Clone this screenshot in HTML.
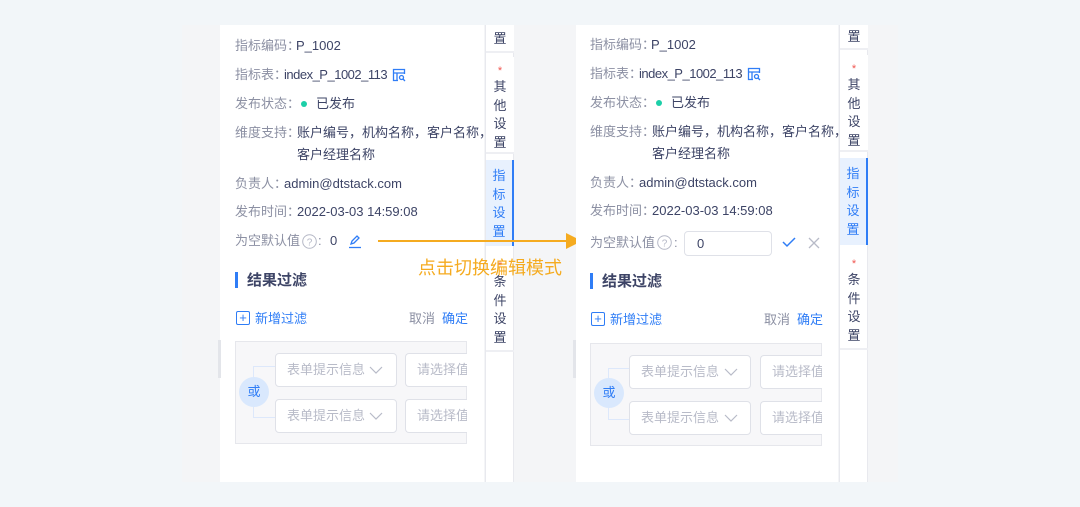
<!DOCTYPE html>
<html><head><meta charset="utf-8"><style>
*{margin:0;padding:0;box-sizing:border-box}
body{width:1080px;height:507px;background:#f2f6f9;position:relative;overflow:hidden;font-family:"Liberation Sans","Noto Sans CJK SC",sans-serif;font-size:13px;line-height:20px;color:#3d4466}
.a{position:absolute;white-space:nowrap}
.lb{color:#8c90a3}
.grey{position:absolute;left:182px;top:25px;width:716px;height:457px;background:#f4f5f7}
.panel{position:absolute;top:25px;height:457px;background:#fff}
.tabs{position:absolute;top:25px;width:29px;height:457px;background:#fff;border-left:1px solid #e8e9ee;border-right:1px solid #e8e9ee}
.tab{position:absolute;left:0;width:28px;font-size:13px;line-height:18.5px;text-align:center;color:#3d4466;border-bottom:2px solid #eeeff3;background:#fff}
.tab.on{background:#e8f1fe;color:#2f7df6;border-right:2px solid #2f7df6;border-bottom:none}
.star{color:#f0554f;font-size:11px;line-height:14px}
.box{position:absolute;background:#f7f7f9;border:1px solid #e6e7ec}
.sel{position:absolute;height:34px;background:#fff;border:1px solid #dfe1e8;border-radius:4px;color:#b8bbc8;font-size:13px;line-height:32px;padding-left:11px;overflow:hidden;white-space:nowrap}
.or{position:absolute;width:30px;height:30px;border-radius:15px;background:#d9e8fd;color:#2f7df6;text-align:center;line-height:30px;font-size:13px}
.blue{color:#2f7df6}
.ix{letter-spacing:-0.5px}
</style></head><body>
<div class="grey"></div>

<!-- LEFT -->
<div class="panel" style="left:220px;width:264px"></div>
<div class="a" style="left:218px;top:340px;width:3px;height:38px;background:#e3e5ea"></div>
<div class="a lb" style="left:235px;top:36px">指标编码：</div><div class="a" style="left:296px;top:36px">P_1002</div>
<div class="a lb" style="left:235px;top:65px">指标表：</div><div class="a ix" style="left:284px;top:65px">index_P_1002_113</div>
<svg class="a" style="left:392px;top:68px" width="14" height="14" viewBox="0 0 14 14" fill="none" stroke="#2f7df6" stroke-width="1.3"><path d="M6 12.5H1.5v-11h11v4.5M1.5 5h11M5 5v7.5"/><circle cx="9.5" cy="9.5" r="2"/><path d="M11 11l2 2"/></svg>
<div class="a lb" style="left:235px;top:94px">发布状态：</div>
<div class="a" style="left:301px;top:101px;width:6px;height:6px;border-radius:3px;background:#1ccfa8"></div>
<div class="a" style="left:316px;top:94px">已发布</div>
<div class="a lb" style="left:235px;top:123px">维度支持：</div><div class="a" style="left:297px;top:123px">账户编号，机构名称，客户名称，</div>
<div class="a" style="left:297px;top:145px">客户经理名称</div>
<div class="a lb" style="left:235px;top:174px">负责人：</div><div class="a" style="left:284px;top:174px">admin@dtstack.com</div>
<div class="a lb" style="left:235px;top:202px">发布时间：</div><div class="a" style="left:297px;top:202px">2022-03-03 14:59:08</div>
<div class="a lb" style="left:235px;top:231px">为空默认值</div>
<svg class="a" style="left:302px;top:234px" width="15" height="15" viewBox="0 0 15 15"><circle cx="7.5" cy="7.5" r="6.8" fill="none" stroke="#b5b8c6"/><text x="7.5" y="11.5" font-size="10" text-anchor="middle" fill="#b5b8c6" font-family="Liberation Sans">?</text></svg>
<div class="a lb" style="left:318px;top:231px">:</div><div class="a" style="left:330px;top:231px">0</div>
<svg class="a" style="left:348px;top:234px" width="14" height="15" viewBox="0 0 14 15" fill="none" stroke="#2f7df6" stroke-width="1.3"><path d="M3 10l1-3 5-5 2 2-5 5z"/><path d="M1 13.5h12"/></svg>
<div class="a" style="left:235px;top:272px;width:3px;height:16px;background:#2f7df6"></div>
<div class="a" style="left:247px;top:272px;font-size:15px;line-height:18px;font-weight:bold;color:#3d4466">结果过滤</div>
<div class="a" style="left:236px;top:311px;width:14px;height:14px;border:1px solid #2f7df6;border-radius:2px;color:#2f7df6;font-size:13px;line-height:11px;text-align:center">+</div>
<div class="a blue" style="left:255px;top:309px">新增过滤</div>
<div class="a" style="left:409px;top:309px;color:#8c90a3">取消</div>
<div class="a blue" style="left:442px;top:309px">确定</div>
<div class="box" style="left:235px;top:341px;width:232px;height:103px"></div>
<div class="a" style="left:253px;top:366px;width:22px;height:52px;border:1px solid #dde8fb;border-right:none"></div>
<div class="or" style="left:239px;top:377px">或</div>
<div class="sel" style="left:275px;top:353px;width:122px">表单提示信息</div>
<div class="sel" style="left:275px;top:399px;width:122px">表单提示信息</div>
<svg class="a" style="left:369px;top:366px" width="14" height="8"><path d="M1 1l6 6 6-6" fill="none" stroke="#b8bbc8" stroke-width="1.2"/></svg>
<svg class="a" style="left:369px;top:412px" width="14" height="8"><path d="M1 1l6 6 6-6" fill="none" stroke="#b8bbc8" stroke-width="1.2"/></svg>
<div class="sel" style="left:405px;top:353px;width:62px;border-right:none;border-radius:4px 0 0 4px">请选择值</div>
<div class="sel" style="left:405px;top:399px;width:62px;border-right:none;border-radius:4px 0 0 4px">请选择值</div>

<div class="tabs" style="left:485px"></div>
<div class="tab" style="left:486px;top:25px;height:28px;padding-top:5px">置</div>
<div class="tab" style="left:486px;top:57px;height:97px;padding-top:7px"><div class="star">*</div>其<br>他<br>设<br>置</div>
<div class="tab on" style="left:486px;top:160px;height:86px;padding-top:7px">指<br>标<br>设<br>置</div>
<div class="tab" style="left:486px;top:252px;height:100px;padding-top:7px;background:transparent"><div class="star">*</div>条<br>件<br>设<br>置</div>

<!-- arrow -->
<div class="a" style="left:378px;top:240px;width:192px;height:2px;background:#f5ab20"></div>
<svg class="a" style="left:566px;top:233px" width="16" height="16"><path d="M0 0L16 8 0 16z" fill="#f5ab20"/></svg>
<div class="a" style="left:418px;top:257px;font-size:18px;line-height:22px;color:#f5ab20">点击切换编辑模式</div>

<!-- RIGHT -->
<div class="panel" style="left:576px;width:262px"></div>
<div class="a" style="left:573px;top:340px;width:3px;height:38px;background:#e3e5ea"></div>
<div class="a lb" style="left:590px;top:35px">指标编码：</div><div class="a" style="left:651px;top:35px">P_1002</div>
<div class="a lb" style="left:590px;top:64px">指标表：</div><div class="a ix" style="left:639px;top:64px">index_P_1002_113</div>
<svg class="a" style="left:747px;top:67px" width="14" height="14" viewBox="0 0 14 14" fill="none" stroke="#2f7df6" stroke-width="1.3"><path d="M6 12.5H1.5v-11h11v4.5M1.5 5h11M5 5v7.5"/><circle cx="9.5" cy="9.5" r="2"/><path d="M11 11l2 2"/></svg>
<div class="a lb" style="left:590px;top:93px">发布状态：</div>
<div class="a" style="left:656px;top:100px;width:6px;height:6px;border-radius:3px;background:#1ccfa8"></div>
<div class="a" style="left:671px;top:93px">已发布</div>
<div class="a lb" style="left:590px;top:122px">维度支持：</div><div class="a" style="left:652px;top:122px">账户编号，机构名称，客户名称，</div>
<div class="a" style="left:652px;top:144px">客户经理名称</div>
<div class="a lb" style="left:590px;top:173px">负责人：</div><div class="a" style="left:639px;top:173px">admin@dtstack.com</div>
<div class="a lb" style="left:590px;top:201px">发布时间：</div><div class="a" style="left:652px;top:201px">2022-03-03 14:59:08</div>
<div class="a lb" style="left:590px;top:233px">为空默认值</div>
<svg class="a" style="left:657px;top:235px" width="15" height="15" viewBox="0 0 15 15"><circle cx="7.5" cy="7.5" r="6.8" fill="none" stroke="#b5b8c6"/><text x="7.5" y="11.5" font-size="10" text-anchor="middle" fill="#b5b8c6" font-family="Liberation Sans">?</text></svg>
<div class="a lb" style="left:674px;top:233px">:</div>
<div class="a" style="left:684px;top:231px;width:88px;height:25px;border:1px solid #dfe1e8;border-radius:4px;padding-left:12px;line-height:23px">0</div>
<svg class="a" style="left:782px;top:237px" width="14" height="11"><path d="M1 5l4 4 8-8" fill="none" stroke="#2f7df6" stroke-width="1.5"/></svg>
<svg class="a" style="left:808px;top:237px" width="12" height="12"><path d="M1 1l10 10M11 1L1 11" fill="none" stroke="#b8bbc8" stroke-width="1.3"/></svg>
<div class="a" style="left:590px;top:273px;width:3px;height:16px;background:#2f7df6"></div>
<div class="a" style="left:602px;top:273px;font-size:15px;line-height:18px;font-weight:bold;color:#3d4466">结果过滤</div>
<div class="a" style="left:591px;top:312px;width:14px;height:14px;border:1px solid #2f7df6;border-radius:2px;color:#2f7df6;font-size:13px;line-height:11px;text-align:center">+</div>
<div class="a blue" style="left:610px;top:310px">新增过滤</div>
<div class="a" style="left:764px;top:310px;color:#8c90a3">取消</div>
<div class="a blue" style="left:797px;top:310px">确定</div>
<div class="box" style="left:590px;top:343px;width:232px;height:103px"></div>
<div class="a" style="left:608px;top:368px;width:22px;height:52px;border:1px solid #dde8fb;border-right:none"></div>
<div class="or" style="left:594px;top:378px">或</div>
<div class="sel" style="left:629px;top:355px;width:122px">表单提示信息</div>
<div class="sel" style="left:629px;top:401px;width:122px">表单提示信息</div>
<svg class="a" style="left:724px;top:368px" width="14" height="8"><path d="M1 1l6 6 6-6" fill="none" stroke="#b8bbc8" stroke-width="1.2"/></svg>
<svg class="a" style="left:724px;top:414px" width="14" height="8"><path d="M1 1l6 6 6-6" fill="none" stroke="#b8bbc8" stroke-width="1.2"/></svg>
<div class="sel" style="left:760px;top:355px;width:62px;border-right:none;border-radius:4px 0 0 4px">请选择值</div>
<div class="sel" style="left:760px;top:401px;width:62px;border-right:none;border-radius:4px 0 0 4px">请选择值</div>

<div class="tabs" style="left:839px"></div>
<div class="tab" style="left:840px;top:25px;height:25px;padding-top:3px">置</div>
<div class="tab" style="left:840px;top:55px;height:97px;padding-top:7px"><div class="star">*</div>其<br>他<br>设<br>置</div>
<div class="tab on" style="left:840px;top:158px;height:87px;padding-top:7px">指<br>标<br>设<br>置</div>
<div class="tab" style="left:840px;top:250px;height:100px;padding-top:7px;background:transparent"><div class="star">*</div>条<br>件<br>设<br>置</div>
</body></html>
